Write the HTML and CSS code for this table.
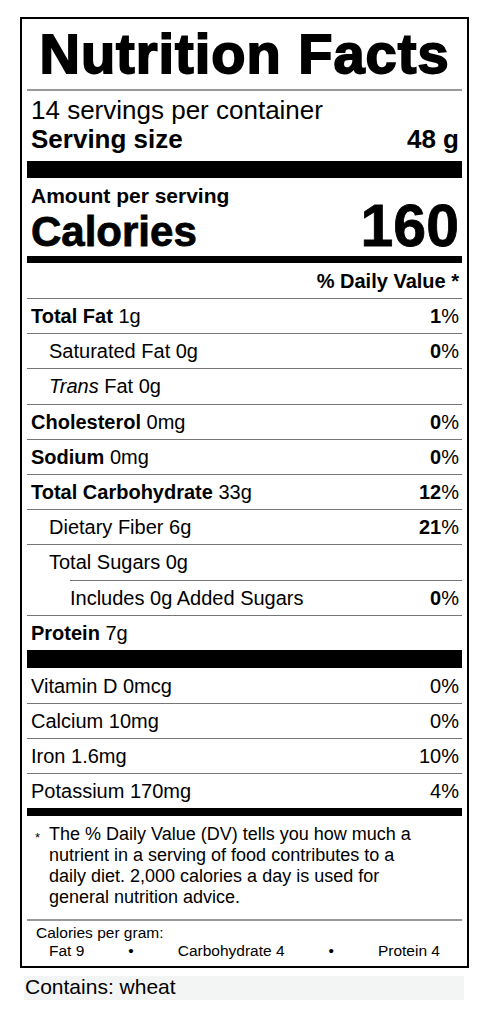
FILE: index.html
```html
<!DOCTYPE html>
<html lang="en">
<head>
    <meta charset="UTF-8">
    <meta name="viewport" content="width=device-width, initial-scale=1.0">
    <title>Nutrition Facts</title>
    <link rel="stylesheet" href="styles.css">
</head>
<body>

    <div class="label">
        <h1 class="title">Nutrition Facts</h1>

        <div class="servings">
            <p class="per-container">14 servings per container</p>
            <p class="serving-size"><span>Serving size</span><span>48 g</span></p>
        </div>

        <div class="bar bar-lg"></div>

        <div class="calories">
            <div>
                <p class="amount">Amount per serving</p>
                <p class="cal-label">Calories</p>
            </div>
            <span class="cal-value">160</span>
        </div>

        <div class="bar bar-md"></div>

        <div class="dv-head">% Daily Value *</div>

        <div class="row"><span><b>Total Fat</b> 1g</span><span><b>1</b>%</span></div>
        <div class="row indent"><span>Saturated Fat 0g</span><span><b>0</b>%</span></div>
        <div class="row indent"><span><i>Trans</i> Fat 0g</span><span></span></div>
        <div class="row"><span><b>Cholesterol</b> 0mg</span><span><b>0</b>%</span></div>
        <div class="row"><span><b>Sodium</b> 0mg</span><span><b>0</b>%</span></div>
        <div class="row"><span><b>Total Carbohydrate</b> 33g</span><span><b>12</b>%</span></div>
        <div class="row indent"><span>Dietary Fiber 6g</span><span><b>21</b>%</span></div>
        <div class="row indent"><span>Total Sugars 0g</span><span></span></div>
        <div class="row added"><span>Includes 0g Added Sugars</span><span><b>0</b>%</span></div>
        <div class="row"><span><b>Protein</b> 7g</span><span></span></div>

        <div class="bar bar-lg bar-protein"></div>

        <div class="vitamins">
            <div class="row"><span>Vitamin D 0mcg</span><span>0%</span></div>
            <div class="row"><span>Calcium 10mg</span><span>0%</span></div>
            <div class="row"><span>Iron 1.6mg</span><span>10%</span></div>
            <div class="row"><span>Potassium 170mg</span><span>4%</span></div>
        </div>

        <div class="bar bar-sm"></div>

        <div class="footnote">
            <span class="star">*</span>
            <p>The % Daily Value (DV) tells you how much a nutrient in a serving of food contributes to a daily diet. 2,000 calories a day is used for general nutrition advice.</p>
        </div>

        <div class="per-gram">
            <p class="per-gram-title">Calories per gram:</p>
            <div class="per-gram-list">
                <span>Fat 9</span>
                <span>&bull;</span>
                <span>Carbohydrate 4</span>
                <span>&bull;</span>
                <span>Protein 4</span>
            </div>
        </div>
    </div>

    <div class="contains">Contains: wheat</div>

</body>
</html>
```

FILE: styles.css
```css
body {
    margin: 0;
    font-family: "Liberation Sans", Arial, sans-serif;
    color: #000;
    background: #fff;
}
p {
    margin: 0;
}
.label {
    width: 449px;
    margin: 17px 0 0 20px;
    border: 2px solid #000;
    padding: 0 5px 6px;
    box-sizing: border-box;
}
.title {
    margin: 0;
    padding: 7px 0;
    font-size: 56px;
    line-height: 56px;
    font-weight: bold;
    text-align: center;
    letter-spacing: 1px;
    -webkit-text-stroke: 1.8px #000;
    border-bottom: 2px solid #999;
}
.servings {
    padding: 4.5px 3px 7.5px 4px;
    font-size: 26px;
    line-height: 29px;
}
.serving-size {
    display: flex;
    justify-content: space-between;
    font-weight: bold;
}
.bar {
    background: #000;
}
.bar-lg { height: 17px; }
.bar-protein { height: 18px; }
.bar-md { height: 7px; }
.bar-sm { height: 8px; }

.calories {
    display: flex;
    justify-content: space-between;
    align-items: flex-end;
    padding: 6px 3px 3px 4px;
}
.amount {
    font-size: 21px;
    line-height: 24px;
    font-weight: bold;
}
.cal-label {
    margin-top: 3px;
    font-size: 42px;
    line-height: 42px;
    font-weight: bold;
    -webkit-text-stroke: 0.8px #000;
}
.cal-value {
    font-size: 59px;
    line-height: 54px;
    font-weight: bold;
    -webkit-text-stroke: 0.8px #000;
}
.dv-head {
    padding: 6.5px 3px 5.5px 4px;
    font-size: 20px;
    line-height: 23px;
    font-weight: bold;
    text-align: right;
}
.row {
    display: flex;
    justify-content: space-between;
    border-top: 1px solid #777;
    padding: 6px 3px 5.2px 4px;
    font-size: 20px;
    line-height: 23px;
}
.row.indent {
    padding-left: 22px;
}
.row.added {
    margin-left: 43px;
    padding-left: 0;
}
.vitamins .row {
    padding-bottom: 5px;
}
.vitamins .row:first-child {
    border-top-color: transparent;
}
.footnote {
    display: flex;
    padding: 8px 0 11px 8px;
    border-bottom: 2px solid #999;
    font-size: 18px;
    line-height: 21px;
}
.star {
    width: 14px;
    flex: none;
    padding-top: 3px;
    font-size: 13px;
}
.footnote p {
    width: 380px;
}
.per-gram {
    padding-top: 3px;
    font-size: 15.5px;
    line-height: 18px;
}
.per-gram-title {
    padding-left: 9px;
}
.per-gram-list {
    display: flex;
    justify-content: space-between;
    padding: 0 22px;
}
.contains {
    width: 440px;
    height: 24px;
    margin: 8px 0 0 24px;
    padding-left: 1px;
    box-sizing: border-box;
    background: #f3f4f4;
    font-size: 21px;
    line-height: 22px;
}
```
